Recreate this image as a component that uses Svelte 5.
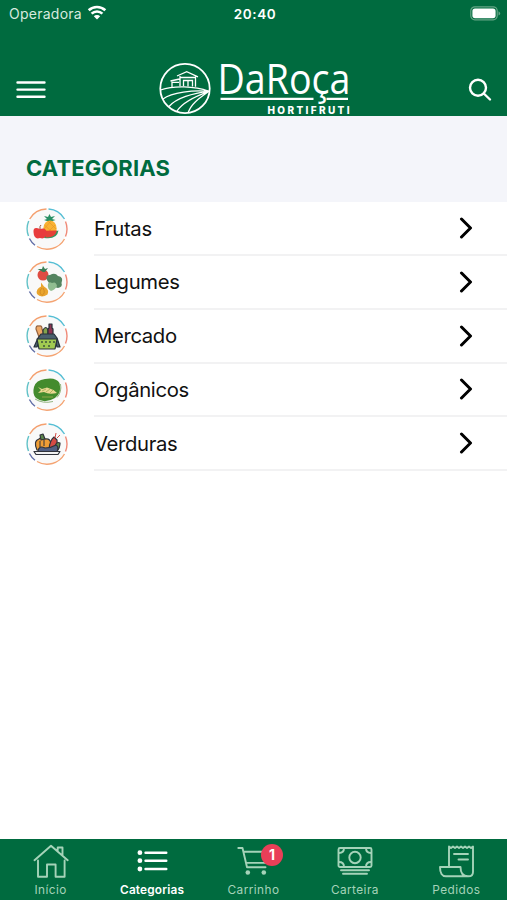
<script lang="ts">
	const categories = [
		{ id: 'frutas', name: 'Frutas' },
		{ id: 'legumes', name: 'Legumes' },
		{ id: 'mercado', name: 'Mercado' },
		{ id: 'organicos', name: 'Orgânicos' },
		{ id: 'verduras', name: 'Verduras' }
	];

	const tabs = [
		{ id: 'home', label: 'Início' },
		{ id: 'list', label: 'Categorias' },
		{ id: 'cart', label: 'Carrinho', badge: 1 },
		{ id: 'wallet', label: 'Carteira' },
		{ id: 'orders', label: 'Pedidos' }
	];

	let active = $state('list');
</script>

<div class="screen">
	<header>
		<div class="status">
			<div class="carrier">
				<span>Operadora</span>
				<svg class="wifi" viewBox="0 0 20 15">
					<path d="M1.7 5.3a12 12 0 0 1 16.6 0M4.6 8.6a7.8 7.8 0 0 1 10.8 0" />
					<path class="solid" d="M6.8 11.3a4.6 4.6 0 0 1 6.4 0L10 14.4z" />
				</svg>
			</div>
			<span class="clock">20:40</span>
			<svg class="battery" viewBox="0 0 31 15">
				<rect class="case" x="0.8" y="0.8" width="26.4" height="13" rx="4" />
				<rect class="charge" x="2.4" y="2.4" width="23.2" height="9.8" rx="2.6" />
				<path class="tip" d="M28.5 5.2q1.7 1 1.7 2.2t-1.7 2.2z" />
			</svg>
		</div>
		<div class="navbar">
			<button class="menu" aria-label="Menu">
				<svg viewBox="0 0 30 20">
					<path d="M1.5 2.5h27M1.5 9.6h27M1.5 16.8h27" />
				</svg>
			</button>
			<svg class="logo" viewBox="0 0 192 54" role="img" aria-label="DaRoça Hortifruti">
				<g class="farm">
					<circle cx="26" cy="27.5" r="24.7" stroke-width="1.8" />
					<path d="M1.500 29C15 24.500 35 25 50 30.300C34 29 13 31 4 38" />
					<path d="M50 30.300C34 32 17 37 10 45.500M50 30.300C37 35 23 42 18 50M50 30.300C39 38 32 43 29 52" />
					<path d="M18 15L27.700 10.700L39 15.800M21 15V25.300M36.500 15.500V25.800M21 16.500H36.500M11.500 20L20.500 18M13 20V26M13 21.300H20" />
					<path d="M24.500 25.300V19.500H33.500V25.500M29 19.500V25.500" />
				</g>
				<text class="brand" x="58.500" y="33" textLength="133" lengthAdjust="spacingAndGlyphs">DaRoça</text>
				<path class="rule" d="M61.500 37.900H154.500M167.500 37.900H189" />
				<text class="tagline" x="108.500" y="52.700" textLength="82">HORTIFRUTI</text>
			</svg>
			<button class="search" aria-label="Buscar">
				<svg viewBox="0 0 24 24">
					<circle cx="10" cy="9.700" r="8" />
					<path d="M15.800 15.500L22 21.500" />
				</svg>
			</button>
		</div>
	</header>

	<h1>CATEGORIAS</h1>

	<ul class="categories">
		{#each categories as category (category.id)}
			<li>
				<svg class="thumb" viewBox="0 0 42 42">
					<circle class="disc" cx="21" cy="21" r="19.500" />
					<g class="ring">
						<path stroke="#f4a06f" d="M3.700 11A20 20 0 0 1 20.500 1" />
						<path stroke="#55bed4" d="M22.500 1A20 20 0 0 1 38.500 11" />
						<path stroke="#ef8a78" d="M39.500 13.500A20 20 0 0 1 39.500 28.500" />
						<path stroke="#f4a473" d="M38.500 31A20 20 0 0 1 11 38.500" />
						<path stroke="#606da6" d="M9 37.200A20 20 0 0 1 3.400 30.500" />
						<path stroke="#62c2c8" d="M2.500 28A20 20 0 0 1 2.700 13" />
					</g>
					{#if category.id === 'frutas'}
						<path fill="#299064" d="M23.500 14L18 12L21 11L18 8L22 9L23.500 6L25 9L29 8L26 11L29.500 12z" />
						<ellipse cx="24" cy="20.500" rx="6.700" ry="8" fill="#f9b233" />
						<path stroke="#e49324" stroke-width=".6" d="M18.500 17L28 26M22 13L30 21M29 17L20 26M25 13L18 21" />
						<path fill="#2d9860" d="M18 30Q31 32 32.500 22.500L19 26z" />
						<path fill="#e44137" d="M17 22.800L31 22.500Q29 30 20 29.500z" />
						<path fill="#e83b3c" d="M14 21Q7 18 7.500 24Q8 32 14 30Q20 32 20.500 24Q20 19 14 21z" />
						<path fill="none" stroke="#94513e" d="M14 21Q13.500 18 15 17" />
					{:else if category.id === 'legumes'}
						<circle cx="17" cy="14" r="5.500" fill="#df4c43" />
						<path fill="#397e56" d="M17 11L11.500 8L16 8L17 5L19 8L22 7L19 11z" />
						<path fill="#548460" d="M21 19Q19 14 24 14Q29 11 32 15Q38 16 35.500 22Q37 26 32 27L25 25z" />
						<path fill="#91bd91" d="M22 23Q23 20 26 22Q30 20 31 25Q29 29 25 30Q21 28 22 23z" />
						<path fill="#e9a52f" d="M15 21.500L18 25.500Q24 29 21.500 33.500Q15 37.500 11 33Q9.500 28 15 25.500z" />
						<path fill="none" stroke="#ca811f" stroke-width=".7" d="M16 27Q12 31 16 34.500Q20 32 17 27" />
					{:else if category.id === 'mercado'}
						<g stroke="#28313a" stroke-width="1.200" stroke-linejoin="round">
							<path fill="#efa967" stroke="#94613e" d="M13 22L10 14Q10 10 13 11Q16 10 16 14L19 22z" />
							<path fill="#83a34c" d="M17 20V15Q20 10 22 15V21z" />
							<path fill="#8e3551" d="M22 20V14L23 13V9H26V13L27 14V20z" />
							<path fill="#4a606d" d="M12 23L15 19H28L31 23L34 32H31L29 25H14L11 32H8z" />
							<path fill="#a1ca51" d="M11 24H31L29 34H13z" />
						</g>
						<path stroke="#314438" stroke-width="1.300" d="M16 26V28M20 26V28M24 26V28M28 26V28M18 30V32M23 30V32" />
					{:else if category.id === 'organicos'}
						<path fill="#438b2d" d="M8 18Q10 11 19 10Q30 8 33.500 14Q36 24 29 29Q18 35.500 10 29Q6 25 8 18z" />
						<path fill="none" stroke="#68984f" stroke-width=".7" d="M9 30Q17 35 27 32.500M34.500 15Q36 23 31 28.500" />
						<path fill="#ead893" d="M12 18L16 20L21 18.500Q27 20 31 24Q23 26 18 23L12 24L15 21z" />
						<path fill="none" stroke="#a5ad52" stroke-width=".8" d="M16 22L20 20M20 23L24 20M24 24L27 21M16 28H27" />
					{:else}
						<g stroke="#30333b" stroke-width="1.200" stroke-linejoin="round">
							<path fill="#ef9d35" d="M11 27Q7 18 13 16Q16 13 19 16Q25 15 25 22V28z" />
							<path fill="#5c874c" d="M15 17L14 12L17 11L19 16z" />
							<path fill="#d54b45" d="M23 26Q24 17 28 14L31 17Q32 23 27 28z" />
							<path fill="#5c874c" d="M29 24Q30 18 34 20Q34 25 31 28z" />
							<path fill="#526083" d="M12 28Q13 22 19 25Q25 25 30 22Q33 23 31 29H12z" />
							<path fill="#f2f2f2" d="M8 28.500H34L32 31.500H10z" />
						</g>
						<path fill="none" stroke="#d54b45" d="M29 15L30 10M31 15L34 12" />
						<path fill="none" stroke="#30333b" d="M14 18V24M18 17V23" />
					{/if}
				</svg>
				<div class="row">
					<span>{category.name}</span>
					<svg class="chevron" viewBox="0 0 14 22">
						<path d="M2.500 2L11.500 11L2.500 20" />
					</svg>
				</div>
			</li>
		{/each}
	</ul>

	<nav>
		{#each tabs as tab (tab.id)}
			<button class="tab" class:active={active === tab.id} onclick={() => (active = tab.id)}>
				<svg viewBox="0 0 36 36">
					{#if tab.id === 'home'}
						<path d="M5 17.500V33.700H14V21.500H22.600V33.700H31.600V17.500M1.500 17.200L18 2.700L34.700 17.200M24.700 7.500V4.500H29.500V12.500" />
					{:else if tab.id === 'list'}
						<path class="lines" d="M11.500 9.700H32.300M11.500 17.700H32.300M11.500 26H32.300" />
						<g class="dots">
							<circle cx="5.900" cy="9.700" r="2.400" />
							<circle cx="5.900" cy="17.700" r="2.400" />
							<circle cx="5.900" cy="26" r="2.400" />
						</g>
					{:else if tab.id === 'cart'}
						<path d="M3.300 5H7.500L12 24.300H30.500M8.300 8.700H34L30.500 19.900H11" />
						<g class="dots">
							<circle cx="12.800" cy="29.500" r="2.300" />
							<circle cx="28.800" cy="29.500" r="2.300" />
						</g>
					{:else if tab.id === 'wallet'}
						<rect x="1.500" y="5" width="33" height="19" rx="1.500" />
						<circle cx="18" cy="14.500" r="5.700" />
						<path d="M2 10Q7 10 7 5M29 5Q29 10 34 10M2 19Q7 19 7 24M29 24Q29 19 34 19M4 27.200H32M6 30.800H30" />
					{:else}
						<path d="M11 23V3.500L13 5L15 3.500L17 5L19 3.500L21 5L23 3.500L25 5L27 3.500L29 5L31 3.500L33 5L35 3.500V29Q35 33.300 30.500 33.300H8Q2 33.300 2 24H22.500Q22.500 33.300 30 33.300M16 11H30M20.500 16.500H30" />
					{/if}
				</svg>
				{#if tab.badge}
					<span class="badge">{tab.badge}</span>
				{/if}
				<span class="label">{tab.label}</span>
			</button>
		{/each}
	</nav>
</div>

<style>
	:global(body) {
		margin: 0;
	}

	.screen {
		display: flex;
		flex-direction: column;
		width: 100%;
		height: 100vh;
		overflow: hidden;
		background: #fff;
		color: #111;
		font-family: Inter, Roboto, sans-serif;
	}

	button {
		padding: 0;
		border: 0;
		background: none;
		color: inherit;
		font: inherit;
	}

	svg {
		display: block;
		flex: none;
	}

	header {
		flex: none;
		height: 115.5px;
		background: #006b3f;
		color: #fff;
	}

	.status {
		display: grid;
		grid-template-columns: 1fr auto 1fr;
		align-items: center;
		height: 27px;
		padding: 0 6px 0 9px;
		font-size: 14px;
	}

	.carrier {
		display: flex;
		align-items: center;
		gap: 5px;
		color: #d7eadf;
		letter-spacing: 0.25px;
	}

	.wifi {
		width: 20px;
		height: 15px;
		margin-top: -2px;
		fill: none;
		stroke: #fff;
		stroke-width: 2.6;
	}

	.wifi .solid {
		fill: #fff;
		stroke: none;
	}

	.clock {
		font-size: 13.5px;
		font-weight: 600;
		letter-spacing: 0.6px;
	}

	.battery {
		justify-self: end;
		width: 31px;
		height: 15px;
		margin-top: -1px;
	}

	.case {
		fill: none;
		stroke: #64a586;
		stroke-width: 1.2;
	}

	.charge {
		fill: #fff;
	}

	.tip {
		fill: #64a586;
	}

	.navbar {
		display: grid;
		grid-template-columns: 1fr auto 1fr;
		align-items: start;
		height: 88.5px;
		padding: 0 15px 0 17px;
		box-sizing: border-box;
	}

	.menu {
		width: 30px;
		margin: 52.5px 0 0 -1px;
	}

	.menu svg {
		width: 30px;
		height: 20px;
		stroke: #fff;
		stroke-width: 2.4;
		stroke-linecap: round;
	}

	.logo {
		width: 192px;
		height: 54px;
		margin-top: 34px;
		overflow: visible;
	}

	.farm {
		fill: none;
		stroke: #fff;
		stroke-width: 1.3;
	}

	.brand {
		fill: #fff;
		font-family: 'Open Sans', sans-serif;
		font-size: 42px;
	}

	.tagline {
		fill: #fff;
		font-size: 10px;
		font-weight: 800;
	}

	.rule {
		stroke: #fff;
		stroke-width: 2.4;
	}

	.search {
		justify-self: end;
		margin-top: 51px;
	}

	.search svg {
		width: 24px;
		height: 24px;
		fill: none;
		stroke: #fff;
		stroke-width: 2.4;
		stroke-linecap: round;
	}

	h1 {
		flex: none;
		display: flex;
		align-items: center;
		height: 86px;
		margin: 0;
		padding: 19px 26px 0;
		box-sizing: border-box;
		background: #f4f5fa;
		color: #006b3f;
		font-size: 22px;
		font-weight: 700;
		letter-spacing: 0.12px;
	}

	.categories {
		flex: 1;
		margin: 0;
		padding: 0.75px 0 0;
		list-style: none;
	}

	li {
		display: flex;
		align-items: center;
		gap: 26px;
		height: 53.75px;
		padding-left: 26px;
	}

	.thumb {
		width: 42px;
		height: 42px;
		margin-top: -1px;
	}

	.row {
		flex: 1;
		display: flex;
		align-items: center;
		justify-content: space-between;
		height: 100%;
		padding-right: 34px;
		box-sizing: border-box;
		border-bottom: 2px solid #f2f2f3;
		font-size: 20.3px;
		letter-spacing: -0.35px;
	}

	.disc {
		fill: #f9f9f9;
	}

	.ring {
		fill: none;
		stroke-width: 1.4;
	}

	.chevron {
		width: 14px;
		height: 22px;
		fill: none;
		stroke: #000;
		stroke-width: 3;
		stroke-linecap: round;
		stroke-linejoin: round;
	}

	nav {
		flex: none;
		display: grid;
		grid-template-columns: repeat(5, 1fr);
		height: 61.5px;
		background: #006b3f;
	}

	.tab {
		position: relative;
		display: flex;
		flex-direction: column;
		align-items: center;
		padding-top: 4.5px;
		color: #a5d3b9;
		font-size: 11.8px;
		letter-spacing: 0.45px;
	}

	.tab svg {
		width: 36px;
		height: 36px;
		fill: none;
		stroke: currentColor;
		stroke-width: 1.9;
		stroke-linejoin: round;
		stroke-linecap: round;
	}

	.tab .lines {
		stroke-width: 2.4;
	}

	.tab .dots {
		fill: currentColor;
		stroke: none;
	}

	.label {
		margin-top: 3px;
		line-height: 16px;
	}

	.tab.active {
		color: #fff;
		font-weight: 600;
		letter-spacing: 0.2px;
	}

	.badge {
		position: absolute;
		top: 5px;
		left: calc(50% + 7.5px);
		width: 22px;
		height: 22px;
		border-radius: 50%;
		background: #e93f58;
		color: #fff;
		font-size: 14px;
		font-weight: 700;
		line-height: 22px;
		letter-spacing: 0;
		text-align: center;
	}
</style>
